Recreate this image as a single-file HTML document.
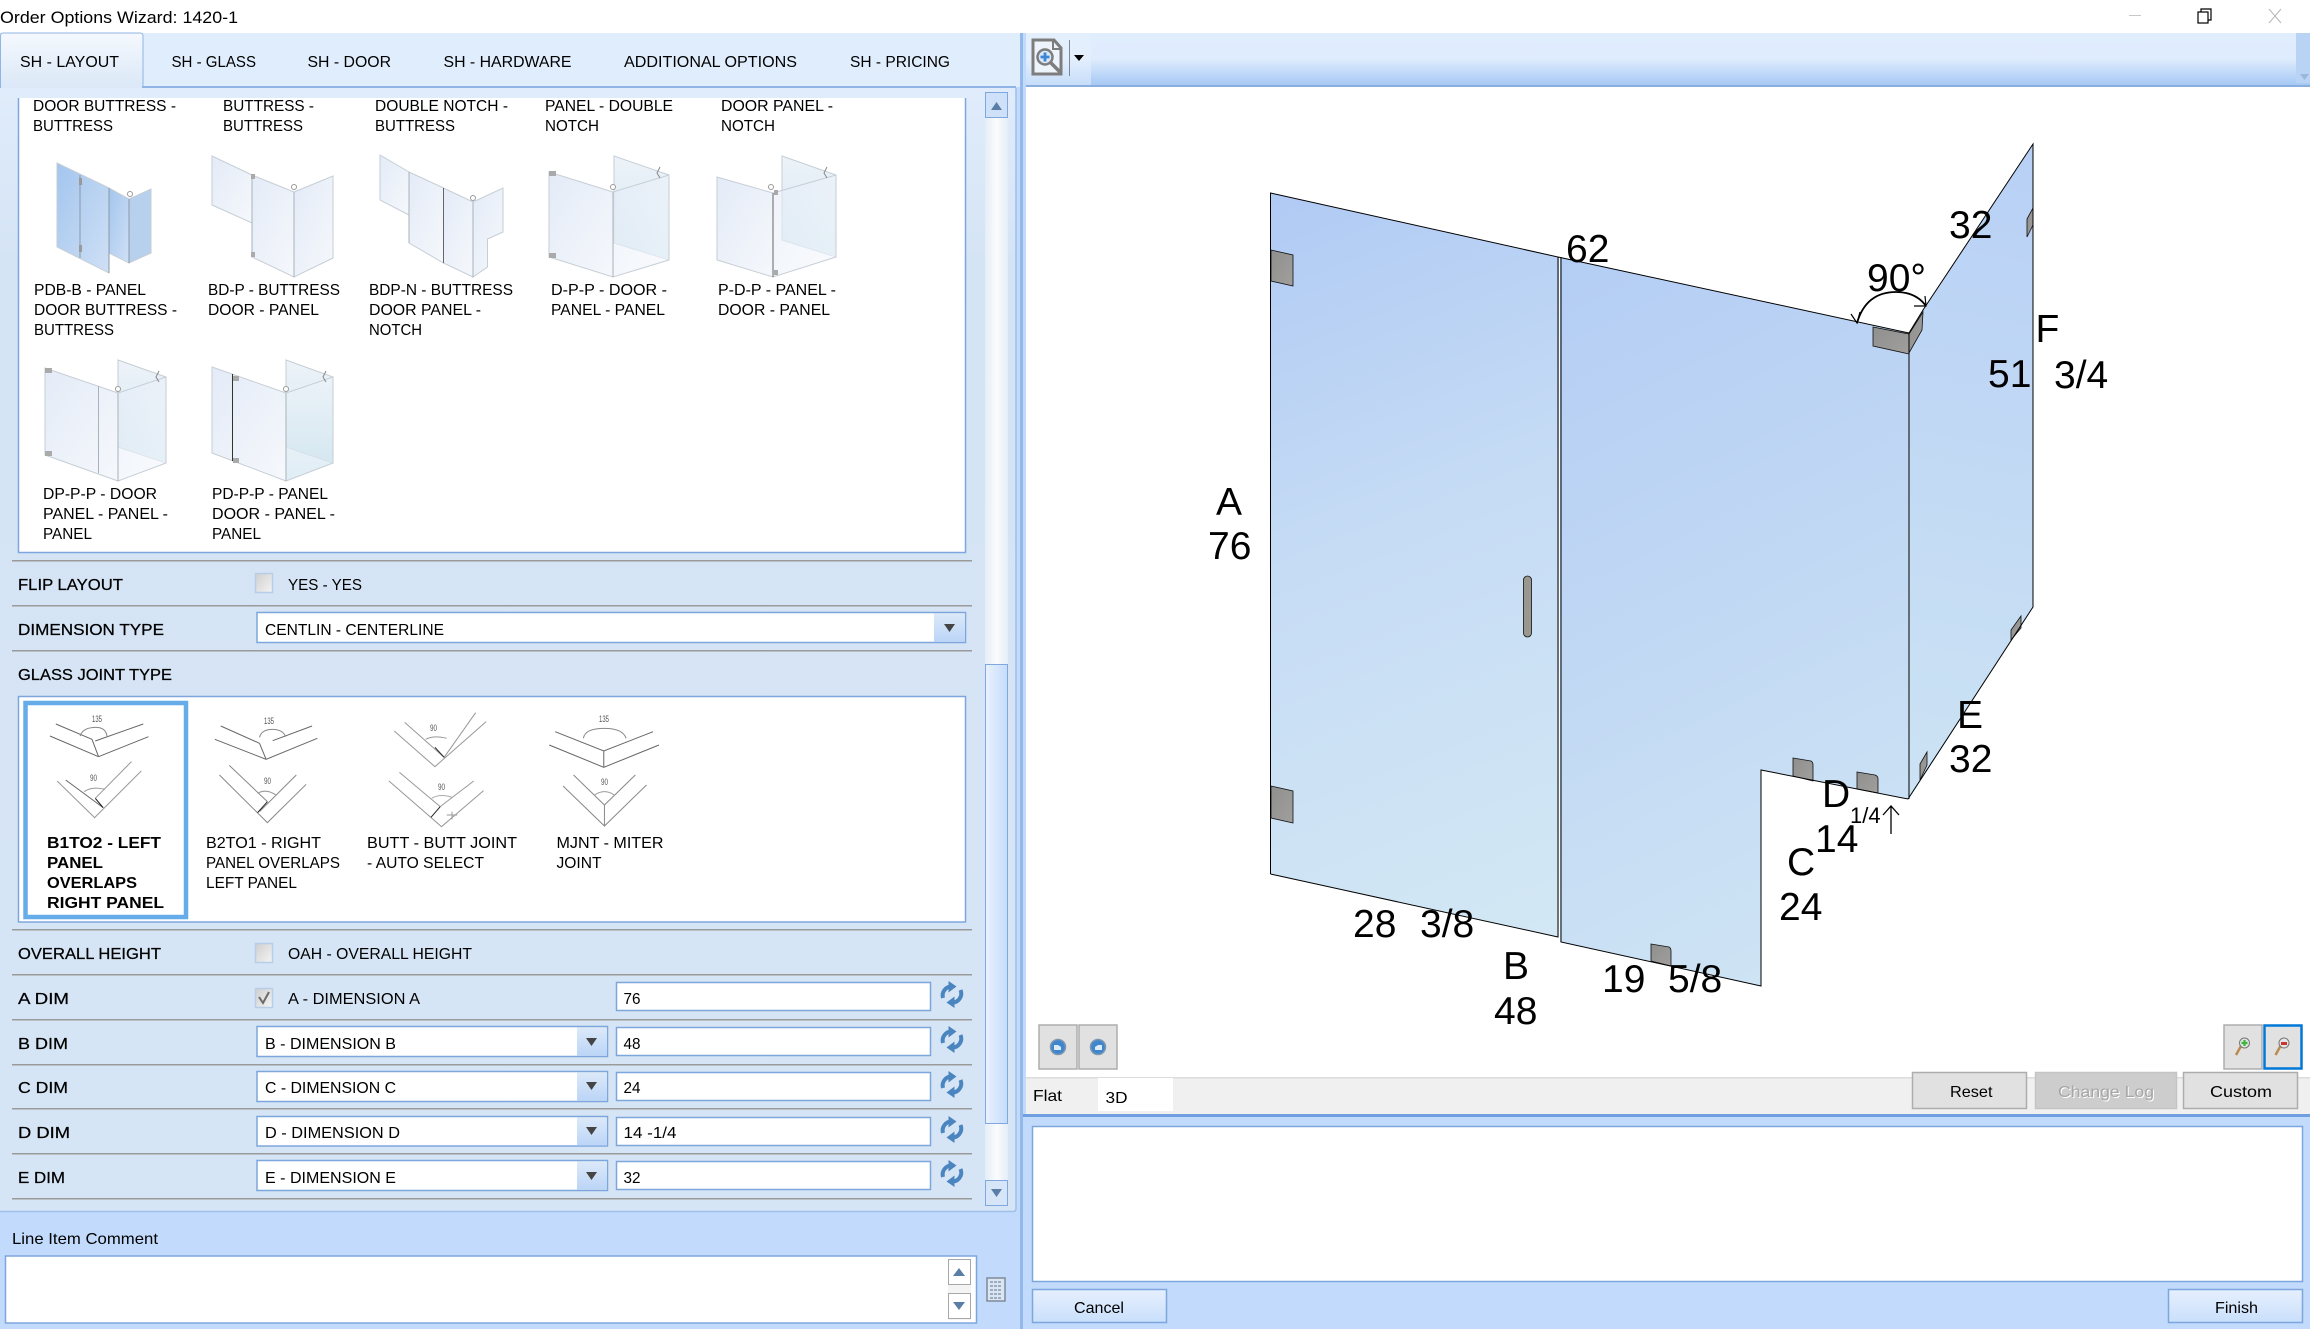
<!DOCTYPE html>
<html><head><meta charset="utf-8"><title>Order Options Wizard: 1420-1</title>
<style>
html,body{margin:0;padding:0;background:#fff;width:2310px;height:1329px;overflow:hidden}
svg{display:block;position:absolute;left:0;top:0}
text{font-family:"Liberation Sans",Arial,sans-serif;font-size:16px;fill:#000}
.d text{font-size:39px}
.b{font-weight:bold}
.m{stroke:#000;stroke-width:.25px}
.j line,.j path{vector-effect:non-scaling-stroke;fill:none}
.t polygon{stroke:#c6ced6;stroke-width:1}
</style></head><body>
<svg width="2310" height="1329" viewBox="0 0 2310 1329" xmlns="http://www.w3.org/2000/svg">
<defs>
<linearGradient id="bar" x1="0" y1="0" x2="0" y2="1"><stop offset="0" stop-color="#e0edfd"/><stop offset=".5" stop-color="#dfecfd"/><stop offset="1" stop-color="#a6c9f5"/></linearGradient>
<linearGradient id="tabsel" x1="0" y1="0" x2="0" y2="1"><stop offset="0" stop-color="#f5f9fe"/><stop offset="1" stop-color="#dbe8f7"/></linearGradient>
<linearGradient id="pane" x1="0" y1="0" x2="0" y2="1"><stop offset="0" stop-color="#e0ecfb"/><stop offset=".15" stop-color="#d5e4f5"/><stop offset="1" stop-color="#d6e5f5"/></linearGradient>
<linearGradient id="track" x1="0" y1="0" x2="1" y2="0"><stop offset="0" stop-color="#e4edf8"/><stop offset=".5" stop-color="#fbfbfb"/><stop offset="1" stop-color="#e4edf8"/></linearGradient>
<linearGradient id="thumb" x1="0" y1="0" x2="1" y2="0"><stop offset="0" stop-color="#eaf2fd"/><stop offset="1" stop-color="#c5dcfb"/></linearGradient>
<linearGradient id="dd" x1="0" y1="0" x2="0" y2="1"><stop offset="0" stop-color="#dce9f8"/><stop offset="1" stop-color="#bcd5f7"/></linearGradient>
<linearGradient id="cb" x1="0" y1="0" x2="1" y2="1"><stop offset="0" stop-color="#cfcfcf"/><stop offset="1" stop-color="#f4f4f4"/></linearGradient>
<linearGradient id="btnb" x1="0" y1="0" x2="0" y2="1"><stop offset="0" stop-color="#e6f0fe"/><stop offset="1" stop-color="#c9dffb"/></linearGradient>
<linearGradient id="g1" gradientUnits="userSpaceOnUse" x1="1271" y1="193" x2="1559" y2="937"><stop offset="0" stop-color="#b0caf4"/><stop offset=".45" stop-color="#c6dcf5"/><stop offset="1" stop-color="#d3e8f4"/></linearGradient>
<linearGradient id="g2" gradientUnits="userSpaceOnUse" x1="1560" y1="257" x2="1909" y2="986"><stop offset="0" stop-color="#b4cdf4"/><stop offset=".5" stop-color="#c2d9f4"/><stop offset="1" stop-color="#d0e6f4"/></linearGradient>
<linearGradient id="g3" gradientUnits="userSpaceOnUse" x1="2033" y1="144" x2="1909" y2="799"><stop offset="0" stop-color="#b8d0f5"/><stop offset="1" stop-color="#cce3f4"/></linearGradient>
<linearGradient id="cl" x1="0" y1="0" x2="1" y2="1"><stop offset="0" stop-color="#8f8f8f"/><stop offset="1" stop-color="#a09f9c"/></linearGradient>
<linearGradient id="tg" x1="0" y1="0" x2="1" y2="1"><stop offset="0" stop-color="#e4ebf7"/><stop offset="1" stop-color="#f5f8fc"/></linearGradient>
<linearGradient id="tr" x1="0" y1="0" x2="0" y2="1"><stop offset="0" stop-color="#edf3f9"/><stop offset="1" stop-color="#d3e6f0"/></linearGradient>
<linearGradient id="tb" x1="0" y1="0" x2="1" y2="1"><stop offset="0" stop-color="#a3c5ee"/><stop offset="1" stop-color="#cfe0f5"/></linearGradient>
</defs>

<!-- base -->
<rect x="0" y="0" width="2310" height="33" fill="#fff"/>
<rect x="0" y="33" width="1021" height="1296" fill="#c2dbfc"/>
<rect x="0" y="33" width="1020" height="54" fill="#e0edfd"/>
<text x="0" y="23" font-size="17" style="font-size:17px" textLength="238" lengthAdjust="spacingAndGlyphs">Order Options Wizard: 1420-1</text>

<!-- window controls -->
<rect x="2129" y="15" width="12" height="1" fill="#c8c8c8"/>
<rect x="2198" y="12" width="10" height="11" fill="#fff" stroke="#000" stroke-width="1.2"/>
<path d="M2201 12v-3h10v11h-3" fill="none" stroke="#000" stroke-width="1.2"/>
<path d="M2269 9l12 14M2281 9l-12 14" stroke="#b8b8b8" stroke-width="1" fill="none"/>

<!-- tab strip -->
<path d="M0.5 87V36q0-3 3-3H140q3 0 3 3V87" fill="url(#tabsel)" stroke="#8fb4e6"/>
<rect x="0" y="86" width="1016" height="2" fill="#8fb4e6"/>
<rect x="1" y="85" width="141" height="4" fill="#dde9f8"/>
<text x="20" y="67" textLength="99" lengthAdjust="spacingAndGlyphs">SH - LAYOUT</text>
<text x="171.500" y="67" textLength="84.500" lengthAdjust="spacingAndGlyphs">SH - GLASS</text>
<text x="307.500" y="67" textLength="83.500" lengthAdjust="spacingAndGlyphs">SH - DOOR</text>
<text x="443.500" y="67" textLength="128" lengthAdjust="spacingAndGlyphs">SH - HARDWARE</text>
<text x="624" y="67" textLength="173" lengthAdjust="spacingAndGlyphs">ADDITIONAL OPTIONS</text>
<text x="850" y="67" textLength="100" lengthAdjust="spacingAndGlyphs">SH - PRICING</text>

<!-- left pane -->
<rect x="0" y="88" width="1016" height="1123" fill="url(#pane)"/>
<path d="M0 1211.500H1013q3 0 3-3V88" fill="none" stroke="#9dbfea" stroke-width="1.5"/>

<!-- scrollbar -->
<rect x="985" y="92" width="23" height="1113" fill="url(#track)"/>
<rect x="985.500" y="92.500" width="22" height="25" fill="#cfe1f8" stroke="#7fa8e0"/>
<path d="M991 110l5.500-8 5.500 8z" fill="#5b7ea6"/>
<rect x="985.500" y="664.500" width="22" height="459" fill="url(#thumb)" stroke="#7fa8e0"/>
<rect x="985.500" y="1180.500" width="22" height="25" fill="#d6e5f7" stroke="#7fa8e0"/>
<path d="M991 1189l5.500 8 5.500-8z" fill="#5b7ea6"/>

<!-- listbox 1 -->
<path d="M18.500 98V552.500H965.500V98" fill="#fff" stroke="#7da6dc" stroke-width="1.5"/>
<g>
<text x="33" y="111" textLength="143" lengthAdjust="spacingAndGlyphs">DOOR BUTTRESS -</text>
<text x="33" y="131" textLength="80" lengthAdjust="spacingAndGlyphs">BUTTRESS</text>
<text x="223" y="111" textLength="91" lengthAdjust="spacingAndGlyphs">BUTTRESS -</text>
<text x="223" y="131" textLength="80" lengthAdjust="spacingAndGlyphs">BUTTRESS</text>
<text x="375" y="111" textLength="133" lengthAdjust="spacingAndGlyphs">DOUBLE NOTCH -</text>
<text x="375" y="131" textLength="80" lengthAdjust="spacingAndGlyphs">BUTTRESS</text>
<text x="545" y="111" textLength="128" lengthAdjust="spacingAndGlyphs">PANEL - DOUBLE</text>
<text x="545" y="131" textLength="54" lengthAdjust="spacingAndGlyphs">NOTCH</text>
<text x="721" y="111" textLength="112" lengthAdjust="spacingAndGlyphs">DOOR PANEL -</text>
<text x="721" y="131" textLength="54" lengthAdjust="spacingAndGlyphs">NOTCH</text>

<text x="34" y="295" textLength="112" lengthAdjust="spacingAndGlyphs">PDB-B - PANEL</text>
<text x="34" y="315" textLength="143" lengthAdjust="spacingAndGlyphs">DOOR BUTTRESS -</text>
<text x="34" y="335" textLength="80" lengthAdjust="spacingAndGlyphs">BUTTRESS</text>
<text x="208" y="295" textLength="132" lengthAdjust="spacingAndGlyphs">BD-P - BUTTRESS</text>
<text x="208" y="315" textLength="111" lengthAdjust="spacingAndGlyphs">DOOR - PANEL</text>
<text x="369" y="295" textLength="144" lengthAdjust="spacingAndGlyphs">BDP-N - BUTTRESS</text>
<text x="369" y="315" textLength="112" lengthAdjust="spacingAndGlyphs">DOOR PANEL -</text>
<text x="369" y="335" textLength="53" lengthAdjust="spacingAndGlyphs">NOTCH</text>
<text x="551" y="295" textLength="116" lengthAdjust="spacingAndGlyphs">D-P-P - DOOR -</text>
<text x="551" y="315" textLength="114" lengthAdjust="spacingAndGlyphs">PANEL - PANEL</text>
<text x="718" y="295" textLength="118" lengthAdjust="spacingAndGlyphs">P-D-P - PANEL -</text>
<text x="718" y="315" textLength="112" lengthAdjust="spacingAndGlyphs">DOOR - PANEL</text>

<text x="43" y="499" textLength="114" lengthAdjust="spacingAndGlyphs">DP-P-P - DOOR</text>
<text x="43" y="519" textLength="125" lengthAdjust="spacingAndGlyphs">PANEL - PANEL -</text>
<text x="43" y="539" textLength="49" lengthAdjust="spacingAndGlyphs">PANEL</text>
<text x="212" y="499" textLength="116" lengthAdjust="spacingAndGlyphs">PD-P-P - PANEL</text>
<text x="212" y="519" textLength="123" lengthAdjust="spacingAndGlyphs">DOOR - PANEL -</text>
<text x="212" y="539" textLength="49" lengthAdjust="spacingAndGlyphs">PANEL</text>
</g>

<!-- layout thumbnails -->
<g class="t">
<!-- PDB-B -->
<polygon points="57,163 109,188 109,273 57,247" fill="url(#tb)"/>
<polygon points="109,253 109,188 129,199 129,263" fill="url(#tb)"/>
<polygon points="129,199 151,189 151,253 129,263" fill="#b6d0ee"/>
<path d="M80 175V258M109 188V273M129 199V263" stroke="#8a98a6" fill="none"/>
<rect x="79" y="178" width="3" height="7" fill="#999"/><rect x="79" y="245" width="3" height="7" fill="#999"/>
<circle cx="130" cy="194" r="2.500" fill="#fff" stroke="#999"/>
<!-- BD-P -->
<polygon points="212,156 252,175 252,223 212,205" fill="url(#tg)"/>
<polygon points="252,175 294,192 294,277 252,257" fill="url(#tg)"/>
<polygon points="294,192 333,176 333,258 294,277" fill="url(#tg)"/>
<path d="M252 175V257M294 192V277" stroke="#a8b2ba" fill="none"/>
<rect x="251" y="174" width="4" height="5" fill="#aaa"/><rect x="251" y="252" width="4" height="5" fill="#aaa"/>
<circle cx="294" cy="187" r="2.500" fill="#fff" stroke="#999"/>
<!-- BDP-N -->
<polygon points="380,155 409,172 409,215 380,200" fill="url(#tg)"/>
<polygon points="409,172 443.500,188 443.500,263 409,243" fill="url(#tg)"/>
<polygon points="443.500,188 473,202 473,277 443.500,263" fill="url(#tg)"/>
<polygon points="473,202 503,188 503,232 487.500,239 487.500,267 473,277" fill="url(#tg)"/>
<path d="M409 172V243M473 202V277" stroke="#a8b2ba" fill="none"/><path d="M443.500 188V263" stroke="#666" fill="none"/>
<circle cx="473" cy="198" r="2.500" fill="#fff" stroke="#999"/>
<!-- D-P-P -->
<polygon points="614,156 669,175 669,260 614,243" fill="url(#tr)"/>
<polygon points="549,172 613,192 613,277 549,257" fill="url(#tg)"/>
<polygon points="613,192 669,175 669,260 613,277" fill="url(#tg)" fill-opacity=".6"/>
<path d="M613 192V277" stroke="#a8b2ba" fill="none"/>
<rect x="549" y="171" width="7" height="5" fill="#aaa"/><rect x="549" y="253" width="7" height="5" fill="#aaa"/>
<circle cx="613" cy="187" r="2.500" fill="#fff" stroke="#999"/>
<!-- P-D-P -->
<polygon points="782,156 836,175 836,257 782,240" fill="url(#tr)"/>
<polygon points="717,177 773,193 773,277 717,260" fill="url(#tg)"/>
<polygon points="773,193 836,175 836,257 773,277" fill="url(#tg)" fill-opacity=".6"/>
<path d="M773 193V277" stroke="#666" fill="none"/>
<rect x="774" y="190" width="4" height="5" fill="#aaa"/><rect x="774" y="270" width="4" height="5" fill="#aaa"/>
<circle cx="771" cy="187" r="2.500" fill="#fff" stroke="#999"/>
<!-- DP-P-P -->
<polygon points="118,360 166,377 166,463 118,447" fill="url(#tr)"/>
<polygon points="45,368 118,393 118,481 45,455" fill="url(#tg)"/>
<polygon points="118,393 166,377 166,463 118,481" fill="url(#tg)" fill-opacity=".6"/>
<path d="M118 393V481M98.500 386V473" stroke="#a8b2ba" fill="none"/>
<rect x="45" y="368" width="7" height="5" fill="#aaa"/><rect x="45" y="451" width="7" height="5" fill="#aaa"/>
<circle cx="118" cy="389" r="2.500" fill="#fff" stroke="#999"/>
<!-- PD-P-P -->
<polygon points="286,360 333,377 333,463 286,447" fill="url(#tr)"/>
<polygon points="212,367 286,393 286,481 212,453" fill="url(#tg)"/>
<polygon points="286,393 333,377 333,463 286,481" fill="url(#tr)" fill-opacity=".7"/>
<path d="M286 393V481" stroke="#a8b2ba" fill="none"/><path d="M232.500 374V461" stroke="#333" fill="none"/>
<rect x="233" y="376" width="6" height="5" fill="#aaa"/><rect x="233" y="458" width="6" height="5" fill="#aaa"/>
<circle cx="286" cy="389" r="2.500" fill="#fff" stroke="#999"/>
<path d="M159 371l-3 6 3 5M326 371l-3 6 3 5M827 167l-3 6 3 5M660 167l-3 6 3 5" stroke="#888" fill="none"/>
</g>

<!-- separators -->
<g fill="#9a9a9a">
<rect x="12" y="560" width="960" height="1.500"/><rect x="12" y="605" width="960" height="1.500"/><rect x="12" y="650" width="960" height="1.500"/>
<rect x="12" y="929" width="960" height="1.500"/><rect x="12" y="974" width="960" height="1.500"/><rect x="12" y="1019" width="960" height="1.500"/>
<rect x="12" y="1064" width="960" height="1.500"/><rect x="12" y="1108" width="960" height="1.500"/><rect x="12" y="1153" width="960" height="1.500"/><rect x="12" y="1198" width="960" height="1.500"/>
</g>

<!-- form rows -->
<text class="m" x="18" y="590" textLength="105" lengthAdjust="spacingAndGlyphs">FLIP LAYOUT</text>
<rect x="255.500" y="573.500" width="17" height="19" fill="url(#cb)" stroke="#b7cde9" stroke-width="1.500"/>
<text x="288" y="590" textLength="74" lengthAdjust="spacingAndGlyphs">YES - YES</text>

<text class="m" x="18" y="635" textLength="146" lengthAdjust="spacingAndGlyphs">DIMENSION TYPE</text>
<rect x="257" y="612.500" width="708.500" height="30" fill="#fff" stroke="#7da6dc" stroke-width="1.500"/>
<rect x="934" y="613.500" width="31" height="28" fill="url(#dd)"/>
<path d="M944 624h11l-5.500 8z" fill="#444"/>
<text x="265" y="635" textLength="179" lengthAdjust="spacingAndGlyphs">CENTLIN - CENTERLINE</text>

<text class="m" x="18" y="680" textLength="154" lengthAdjust="spacingAndGlyphs">GLASS JOINT TYPE</text>

<!-- listbox 2 -->
<rect x="18.500" y="696.500" width="947" height="225.500" fill="#fff" stroke="#7da6dc" stroke-width="1.500"/>
<rect x="25.500" y="703" width="160.500" height="214" fill="#fff" stroke="#66ace8" stroke-width="4.500"/>
<text class="b" x="47" y="848" textLength="114" lengthAdjust="spacingAndGlyphs">B1TO2 - LEFT</text>
<text class="b" x="47" y="868" textLength="56" lengthAdjust="spacingAndGlyphs">PANEL</text>
<text class="b" x="47" y="888" textLength="90" lengthAdjust="spacingAndGlyphs">OVERLAPS</text>
<text class="b" x="47" y="908" textLength="117" lengthAdjust="spacingAndGlyphs">RIGHT PANEL</text>
<text x="206" y="848" textLength="115" lengthAdjust="spacingAndGlyphs">B2TO1 - RIGHT</text>
<text x="206" y="868" textLength="134" lengthAdjust="spacingAndGlyphs">PANEL OVERLAPS</text>
<text x="206" y="888" textLength="91" lengthAdjust="spacingAndGlyphs">LEFT PANEL</text>
<text x="367" y="848" textLength="150" lengthAdjust="spacingAndGlyphs">BUTT - BUTT JOINT</text>
<text x="367" y="868" textLength="117" lengthAdjust="spacingAndGlyphs">- AUTO SELECT</text>
<text x="556.500" y="848" textLength="107" lengthAdjust="spacingAndGlyphs">MJNT - MITER</text>
<text x="556.500" y="868" textLength="45" lengthAdjust="spacingAndGlyphs">JOINT</text>

<!-- joint icons, drawn in 1.522x / 3x space -->
<g class="j" transform="scale(.657,.33333) translate(0,2040)" stroke="#777" stroke-width="1">
<path d="M85 132L140 178M76 168L150 230M150 230L226 170M145 183L218 132M140 178L150 230" stroke="#666"/>
<path d="M122 168Q126 142 146 142Q162 142 163 172" stroke="#888"/>
<path d="M100 300L157 383" stroke="#666"/><path d="M145 355L157 383" stroke="#111"/><path d="M87 303L144 413L215 273M145 355L200 245" stroke="#999"/>
<path d="M128 335Q140 318 160 328" stroke="#999"/>

<path d="M336 138L395 190M327 178L405 238L483 175M415 182L475 138M395 190L405 238" stroke="#666"/>
<path d="M395 172Q398 148 415 148Q430 148 435 170" stroke="#888"/>
<path d="M349 256L407 365M334 285L407 428L466 313M395 395L451 285" stroke="#888"/><path d="M407 365L392 398" stroke="#222"/>
<path d="M392 340Q405 325 420 345" stroke="#999"/>

<path d="M616 127L676 232L724 98M600 153L662 260L740 125" stroke="#999"/><path d="M662 202L676 232" stroke="#222"/>
<path d="M648 178Q660 165 680 175" stroke="#999"/>
<path d="M608 277L670 380L721 303M592 303L672 440L736 332" stroke="#999"/><path d="M670 380L656 412" stroke="#222"/>
<path d="M657 355Q670 340 688 352" stroke="#aaa"/><path d="M688 395V418M680 405H696" stroke="#999"/>

<path d="M845 155L919 213L994 155M836 195L919 262L1003 195M919 213V262" stroke="#666"/>
<path d="M888 175Q890 145 920 145Q948 145 953 175" stroke="#888"/>
<path d="M873 285L920 375L967 285M857 318L920 438L984 315M920 375V438" stroke="#888"/>
<path d="M905 345Q920 325 935 345" stroke="#999"/>
</g>
<g style="fill:#555">
<text x="92" y="722" textLength="10" lengthAdjust="spacingAndGlyphs" style="font-size:9px;fill:#555">135</text>
<text x="90" y="781" textLength="7" lengthAdjust="spacingAndGlyphs" style="font-size:9px;fill:#555">90</text>
<text x="264" y="724" textLength="10" lengthAdjust="spacingAndGlyphs" style="font-size:9px;fill:#555">135</text>
<text x="264" y="784" textLength="7" lengthAdjust="spacingAndGlyphs" style="font-size:9px;fill:#555">90</text>
<text x="430" y="731" textLength="7" lengthAdjust="spacingAndGlyphs" style="font-size:9px;fill:#555">90</text>
<text x="438" y="790" textLength="7" lengthAdjust="spacingAndGlyphs" style="font-size:9px;fill:#555">90</text>
<text x="599" y="722" textLength="10" lengthAdjust="spacingAndGlyphs" style="font-size:9px;fill:#555">135</text>
<text x="601" y="785" textLength="7" lengthAdjust="spacingAndGlyphs" style="font-size:9px;fill:#555">90</text>
</g>

<text class="m" x="18" y="959" textLength="143" lengthAdjust="spacingAndGlyphs">OVERALL HEIGHT</text>
<rect x="255.500" y="943.500" width="17" height="19" fill="url(#cb)" stroke="#b7cde9" stroke-width="1.500"/>
<text x="288" y="959" textLength="184" lengthAdjust="spacingAndGlyphs">OAH - OVERALL HEIGHT</text>

<text class="m" x="18" y="1004" textLength="51" lengthAdjust="spacingAndGlyphs">A DIM</text>
<rect x="255.500" y="988.500" width="17" height="19" fill="url(#cb)" stroke="#b7cde9" stroke-width="1.500"/>
<path d="M259 997l4 6 6-11" fill="none" stroke="#6a6a6a" stroke-width="2"/>
<text x="288" y="1004" textLength="132" lengthAdjust="spacingAndGlyphs">A - DIMENSION A</text>
<rect x="616.500" y="982.500" width="314" height="28" fill="#fff" stroke="#7da6dc" stroke-width="1.500"/>
<text x="623.500" y="1004" textLength="17" lengthAdjust="spacingAndGlyphs">76</text>

<text class="m" x="18" y="1049" textLength="50" lengthAdjust="spacingAndGlyphs">B DIM</text>
<rect x="257" y="1026.500" width="350.500" height="30" fill="#fff" stroke="#7da6dc" stroke-width="1.500"/>
<rect x="577" y="1027.500" width="30" height="28" fill="url(#dd)"/><path d="M586 1038h11l-5.500 8z" fill="#444"/>
<text x="265" y="1049" textLength="131" lengthAdjust="spacingAndGlyphs">B - DIMENSION B</text>
<rect x="616.500" y="1027.500" width="314" height="28" fill="#fff" stroke="#7da6dc" stroke-width="1.500"/>
<text x="623.500" y="1049" textLength="17" lengthAdjust="spacingAndGlyphs">48</text>

<text class="m" x="18" y="1093" textLength="50" lengthAdjust="spacingAndGlyphs">C DIM</text>
<rect x="257" y="1071.500" width="350.500" height="30" fill="#fff" stroke="#7da6dc" stroke-width="1.500"/>
<rect x="577" y="1072.500" width="30" height="28" fill="url(#dd)"/><path d="M586 1082h11l-5.500 8z" fill="#444"/>
<text x="265" y="1093" textLength="131" lengthAdjust="spacingAndGlyphs">C - DIMENSION C</text>
<rect x="616.500" y="1072.500" width="314" height="28" fill="#fff" stroke="#7da6dc" stroke-width="1.500"/>
<text x="623.500" y="1093" textLength="17" lengthAdjust="spacingAndGlyphs">24</text>

<text class="m" x="18" y="1138" textLength="52" lengthAdjust="spacingAndGlyphs">D DIM</text>
<rect x="257" y="1116.500" width="350.500" height="29.500" fill="#fff" stroke="#7da6dc" stroke-width="1.500"/>
<rect x="577" y="1117.500" width="30" height="28" fill="url(#dd)"/><path d="M586 1127h11l-5.500 8z" fill="#444"/>
<text x="265" y="1138" textLength="135" lengthAdjust="spacingAndGlyphs">D - DIMENSION D</text>
<rect x="616.500" y="1117.500" width="314" height="28" fill="#fff" stroke="#7da6dc" stroke-width="1.500"/>
<text x="623.500" y="1138" textLength="53" lengthAdjust="spacingAndGlyphs">14 -1/4</text>

<text class="m" x="18" y="1183" textLength="47" lengthAdjust="spacingAndGlyphs">E DIM</text>
<rect x="257" y="1160.500" width="350.500" height="30" fill="#fff" stroke="#7da6dc" stroke-width="1.500"/>
<rect x="577" y="1161.500" width="30" height="28" fill="url(#dd)"/><path d="M586 1172h11l-5.500 8z" fill="#444"/>
<text x="265" y="1183" textLength="131" lengthAdjust="spacingAndGlyphs">E - DIMENSION E</text>
<rect x="616.500" y="1161.500" width="314" height="28" fill="#fff" stroke="#7da6dc" stroke-width="1.500"/>
<text x="623.500" y="1183" textLength="17" lengthAdjust="spacingAndGlyphs">32</text>

<!-- refresh icons -->
<g fill="none" stroke="#4a85bf" stroke-width="4" transform="translate(-1.500,0)">
<g><path d="M944.500 1043a9 9 0 0 1 9-11.500M962 1035a9 9 0 0 1-9 12.500"/><path d="M950 1026l8 5.500-8 6zM956 1053l-8-5.500 8-6z" fill="#4a85bf" stroke="none"/></g>
<g transform="translate(0,-45)"><path d="M944.500 1043a9 9 0 0 1 9-11.500M962 1035a9 9 0 0 1-9 12.500"/><path d="M950 1026l8 5.500-8 6zM956 1053l-8-5.500 8-6z" fill="#4a85bf" stroke="none"/></g>
<g transform="translate(0,45)"><path d="M944.500 1043a9 9 0 0 1 9-11.500M962 1035a9 9 0 0 1-9 12.500"/><path d="M950 1026l8 5.500-8 6zM956 1053l-8-5.500 8-6z" fill="#4a85bf" stroke="none"/></g>
<g transform="translate(0,90)"><path d="M944.500 1043a9 9 0 0 1 9-11.500M962 1035a9 9 0 0 1-9 12.500"/><path d="M950 1026l8 5.500-8 6zM956 1053l-8-5.500 8-6z" fill="#4a85bf" stroke="none"/></g>
<g transform="translate(0,134)"><path d="M944.500 1043a9 9 0 0 1 9-11.500M962 1035a9 9 0 0 1-9 12.500"/><path d="M950 1026l8 5.500-8 6zM956 1053l-8-5.500 8-6z" fill="#4a85bf" stroke="none"/></g>
</g>

<!-- comment -->
<text x="12" y="1244" textLength="146" lengthAdjust="spacingAndGlyphs">Line Item Comment</text>
<rect x="5.500" y="1256" width="971" height="67" fill="#fff" stroke="#7da6dc" stroke-width="1.500"/>
<rect x="948" y="1259" width="23" height="61" fill="#f4f4f4"/>
<rect x="948.500" y="1259.500" width="22" height="25" fill="#fff" stroke="#a8a8a8"/><path d="M953 1276l6-8 6 8z" fill="#5b7ea6"/>
<rect x="948.500" y="1293.500" width="22" height="25" fill="#fff" stroke="#a8a8a8"/><path d="M953 1302l6 8 6-8z" fill="#5b7ea6"/>
<rect x="987" y="1278" width="18" height="23" fill="#d9e6f5" stroke="#808a96" stroke-width="1.500"/>
<path d="M990 1282h12M990 1286h12M990 1290h12M990 1294h12M990 1298h12" stroke="#808a96" stroke-width="1.200" stroke-dasharray="3 1"/>

<!-- right side -->
<rect x="1020" y="33" width="3" height="1296" fill="#93b8ea"/>
<rect x="1023" y="33" width="1287" height="1296" fill="#c2dbfc"/>
<rect x="1026" y="33" width="1284" height="52" fill="url(#bar)"/>
<rect x="1026" y="85" width="1284" height="2" fill="#8aaee0"/>
<rect x="1026" y="33" width="65" height="52" fill="#e8f1fd" fill-opacity=".5"/>
<rect x="2296" y="33" width="14" height="50" fill="#b9d3f5"/>
<path d="M2300 74h9l-4.500 6z" fill="#9ab7dc"/>
<!-- toolbar icon -->
<g transform="translate(1,0)">
<path d="M1032 40H1053L1060 48V74H1032Z" fill="#eef4fc" stroke="#7d7d7d" stroke-width="3"/>
<path d="M1052 40V49H1060" fill="none" stroke="#7d7d7d" stroke-width="2"/>
<circle cx="1044" cy="57" r="7.500" fill="#dbe8f7" stroke="#7d7d7d" stroke-width="2.500"/>
<path d="M1044 52.500v9M1039.500 57h9" stroke="#3b86d6" stroke-width="2.800"/>
<path d="M1050 63l9 9" stroke="#7d7d7d" stroke-width="3.500"/>
</g>
<rect x="1069" y="40" width="1" height="36" fill="#7d8894"/>
<path d="M1074 55h10l-5 6z" fill="#000"/>

<!-- canvas -->
<rect x="1026" y="87" width="1284" height="990" fill="#fff"/>

<!-- glass -->
<polygon points="1271,193 1559,257 1559,937 1271,874" fill="url(#g1)"/>
<polygon points="1560,257 1909,333 1909,799 1761,770 1761,986 1560,942" fill="url(#g2)"/>
<polygon points="2033,144 1923,310 1909,353 1909,799 2033,607" fill="url(#g3)"/>
<!-- clips -->
<g stroke="#111" stroke-width=".8" fill="url(#cl)">
<polygon points="1271,250 1293,255 1293,286 1271,281"/>
<polygon points="1271,786 1293,791 1293,823 1271,818"/>
<polygon points="1873,327 1909,334 1909,354 1873,346"/>
<polygon points="1909,334 1923,312 1922,330 1909,353"/>
<polygon points="2033,208 2027,219 2027,237 2033,225"/>
<polygon points="2021,616 2011,630 2011,640 2021,628"/>
<path d="M1793 758l18 3q2 1 2 4v16l-20-5z"/>
<path d="M1857 772l18 3q3 1 3 4v14l-21-4z"/>
<path d="M1651 944l18 3q2 1 2 4v15l-20-5z"/>
<polygon points="1927,752 1920,764 1920,780 1927,765"/>
<rect x="1523.500" y="576" width="8" height="61" rx="4" fill="#99978f"/>
</g>
<!-- outlines -->
<g fill="none" stroke="#000" stroke-width="1">
<path d="M1270.500 874V193L1558 257V937L1270.500 874"/>
<path d="M1561 257V942L1761 986V770L1908 799L2033 607V144L1923 310L1909 333L1558 257"/>
<path d="M1909 333V799"/>
</g>
<!-- angle -->
<g fill="none" stroke="#000" stroke-width="1.800">
<path d="M1857 323Q1866 292 1896 292Q1916 292 1926 306"/>
<path d="M1851 314l6 9 3-11M1914 306l12 0-1-10" stroke-width="1.200"/>
<path d="M1891 834V807M1883 815l8-9 8 9" stroke-width="1.300"/>
</g>
<g class="d">
<text x="1216" y="515">A</text>
<text x="1208" y="559">76</text>
<text x="1566" y="262">62</text>
<text x="1949" y="238">32</text>
<text x="1867" y="291">90°</text>
<text x="2035.500" y="342">F</text>
<text x="1988" y="387">51</text>
<text x="2054" y="388">3/4</text>
<text x="1957" y="728">E</text>
<text x="1949" y="772">32</text>
<text x="1822" y="807">D</text>
<text x="1850" y="823" style="font-size:22px">1/4</text>
<text x="1815" y="852">14</text>
<text x="1787" y="875">C</text>
<text x="1779" y="920">24</text>
<text x="1353" y="937">28</text>
<text x="1420" y="937">3/8</text>
<text x="1503" y="979">B</text>
<text x="1494" y="1024">48</text>
<text x="1602" y="992">19</text>
<text x="1668" y="992">5/8</text>
</g>

<!-- canvas buttons -->
<g fill="#e1e1e1" stroke="#adadad" stroke-width="1.500">
<rect x="1039" y="1025" width="38" height="44"/>
<rect x="1079" y="1025" width="38" height="44"/>
<rect x="2224" y="1025" width="38" height="44"/>
<rect x="2264.500" y="1025.500" width="37" height="43" stroke="#0078d7" stroke-width="2.500"/>
</g>
<circle cx="1058" cy="1047" r="7.500" fill="#3f86cf" stroke="#7c97ae" stroke-width="1.500"/>
<path d="M1054 1045h4l3 2v3h-7z" fill="#dcebf8"/>
<circle cx="1098" cy="1047" r="7.500" fill="#3f86cf" stroke="#7c97ae" stroke-width="1.500"/>
<path d="M1102 1045h-4l-3 2v3h7z" fill="#dcebf8"/>
<path d="M2236 1055l5-9" stroke="#b98c4e" stroke-width="2.500" fill="none"/>
<circle cx="2244.500" cy="1043" r="5" fill="#dfe6df" stroke="#777"/>
<path d="M2244.500 1040v6M2241.500 1043h6" stroke="#3fb53f" stroke-width="2.200"/>
<path d="M2275.500 1055l5-9" stroke="#b98c4e" stroke-width="2.500" fill="none"/>
<circle cx="2284" cy="1043" r="5" fill="#e4e4e4" stroke="#777"/>
<rect x="2281" y="1042" width="6" height="3" fill="#c33"/>

<!-- tab row -->
<rect x="1026" y="1077" width="1284" height="37" fill="#f0f0f0"/>
<rect x="1026" y="1077" width="1284" height="1.500" fill="#dcdcdc"/>
<rect x="1098" y="1078" width="75" height="33" fill="#fff"/>
<text x="1033" y="1101" textLength="29" lengthAdjust="spacingAndGlyphs">Flat</text>
<text x="1105.500" y="1103" textLength="22" lengthAdjust="spacingAndGlyphs">3D</text>
<rect x="1912.500" y="1072.500" width="114" height="36" fill="#e1e1e1" stroke="#adadad" stroke-width="1.500"/>
<rect x="2035.500" y="1072.500" width="141" height="36" fill="#cdcdcd" stroke="#c4c4c4" stroke-width="1.500"/>
<rect x="2183.500" y="1072.500" width="114" height="36" fill="#e1e1e1" stroke="#adadad" stroke-width="1.500"/>
<text x="1950" y="1097" textLength="42.500" lengthAdjust="spacingAndGlyphs">Reset</text>
<text x="2059" y="1098" textLength="96" lengthAdjust="spacingAndGlyphs" style="fill:#fff">Change Log</text>
<text x="2058" y="1097" textLength="96" lengthAdjust="spacingAndGlyphs" style="fill:#a6a6a6">Change Log</text>
<text x="2210" y="1097" textLength="62" lengthAdjust="spacingAndGlyphs">Custom</text>

<!-- bottom right -->
<rect x="1023" y="1114" width="1287" height="3" fill="#6f9fe0"/>
<rect x="1032.500" y="1126.500" width="1270" height="155" fill="#fff" stroke="#7da6dc" stroke-width="1.500"/>
<rect x="1032.500" y="1289.500" width="134" height="33" fill="url(#btnb)" stroke="#7da6dc" stroke-width="1.500"/>
<rect x="2168.500" y="1289.500" width="134" height="33" fill="url(#btnb)" stroke="#7da6dc" stroke-width="1.500"/>
<text x="1074" y="1313" textLength="50" lengthAdjust="spacingAndGlyphs">Cancel</text>
<text x="2215" y="1313" textLength="43" lengthAdjust="spacingAndGlyphs">Finish</text>
</svg>
</body></html>
